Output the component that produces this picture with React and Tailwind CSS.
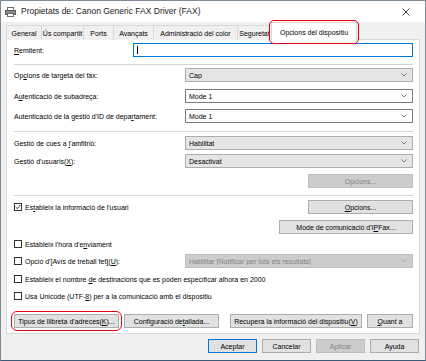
import React from "react";

function PrinterIcon() {
  return (
    <svg width="11" height="10" viewBox="0 0 11 10" className="shrink-0">
      <rect x="2.5" y="0.5" width="6" height="3" fill="#fff" stroke="#6b6b6b" />
      <rect x="0.5" y="3.5" width="10" height="4" fill="#8a8a8a" stroke="#5c5c5c" />
      <rect x="2.5" y="6.5" width="6" height="3" fill="#fff" stroke="#6b6b6b" />
    </svg>
  );
}

function Chevron({ color = "#606060" }) {
  return (
    <svg width="6" height="4" viewBox="0 0 6 4" className="shrink-0">
      <path d="M0.5 0.5 L3 3 L5.5 0.5" fill="none" stroke={color} strokeWidth="0.8" />
    </svg>
  );
}

function Combo({ value, kind = "white", className = "" }) {
  const styles = {
    white: "bg-white border-[#7a7a7a] text-black",
    gray: "bg-[#e5e5e5] border-[#adadad] text-black",
    disabled: "bg-[#cccccc] border-[#bfbfbf] text-[#838383]",
  };
  return (
    <div className={`h-[14px] border flex items-center pl-[3px] pr-[5px] ${styles[kind]} ${className}`}>
      <span className="flex-1 truncate">{value}</span>
      <Chevron color={kind === "disabled" ? "#a0a0a0" : "#606060"} />
    </div>
  );
}

function Btn({ children, disabled, primary, className = "" }) {
  return (
    <div
      className={`h-[14px] border flex items-center justify-center whitespace-nowrap ${
        disabled
          ? "bg-[#cccccc] border-[#bfbfbf] text-[#838383]"
          : primary
          ? "bg-[#e1e1e1] border-[#0078d7]"
          : "bg-[#e1e1e1] border-[#adadad]"
      } ${className}`}
    >
      {children}
    </div>
  );
}

function Check({ checked }) {
  return (
    <div className="w-[8px] h-[8px] border border-[#333] bg-white flex items-center justify-center shrink-0">
      {checked && (
        <svg width="6" height="6" viewBox="0 0 6 6">
          <path d="M0.6 3 L2.3 4.7 L5.4 1" fill="none" stroke="#222" strokeWidth="0.9" />
        </svg>
      )}
    </div>
  );
}

function Sep() {
  return <div className="h-px bg-[#d4d4d4]" />;
}

const tabs = [
  { label: "General", w: "w-[35px]" },
  { label: "Ús compartit", w: "w-[42px]" },
  { label: "Ports", w: "w-[30px]" },
  { label: "Avançats", w: "w-[40px]" },
  { label: "Administració del color", w: "w-[84px]" },
  { label: "Seguretat", w: "w-[34px]" },
];

export default function App() {
  return (
    <div className="w-[426px] h-[361px] bg-[#f0f0f0] border border-[#7d8a96] border-b-[#3e5a76] flex flex-col overflow-hidden font-['Liberation_Sans',Arial,sans-serif] text-[7px] text-black leading-none">
      {/* barra de títol */}
      <div className="h-[21px] bg-white flex items-center pl-[4px] pr-[15px] shrink-0">
        <PrinterIcon />
        <span className="ml-[5px] text-[8.5px] text-[#222]">Propietats de: Canon Generic FAX Driver (FAX)</span>
        <svg width="8" height="8" viewBox="0 0 8 8" className="ml-auto">
          <path d="M0.5 0.5 L7.5 7.5 M7.5 0.5 L0.5 7.5" stroke="#333" strokeWidth="0.9" />
        </svg>
      </div>

      {/* pestanyes */}
      <div className="h-[18px] flex items-end pl-[5px] shrink-0 relative z-10">
        {tabs.map((t) => (
          <div
            key={t.label}
            className={`${t.w} h-[15px] border border-b-0 border-r-0 border-[#d9d9d9] bg-[#f0f0f0] flex items-center justify-center whitespace-nowrap overflow-hidden`}
          >
            {t.label}
          </div>
        ))}
        <div className="h-[20px] -mb-[2px] rounded-[3px] outline outline-[1.5px] outline-offset-[1px] outline-[#e60012] flex">
          <div className="w-[86px] h-[19px] border border-b-0 border-[#d9d9d9] bg-white flex items-center justify-center whitespace-nowrap">
            Opcions del dispositiu
          </div>
        </div>
      </div>

      {/* panell */}
      <div className="mx-[5px] bg-white border border-[#d9d9d9] pl-[7px] pr-[6px] pb-[5px] -mt-px flex flex-col">
        <div className="mt-[3px] h-[14px] flex items-center">
          <span className="w-[119px]"><u>R</u>emitent:</span>
          <div className="flex-1 h-[14px] border border-[#0078d7] flex items-center pl-[3px]">
            <div className="w-px h-[8px] bg-black" />
          </div>
        </div>
        <div className="mt-[7px]"><Sep /></div>

        <div className="mt-[3px] h-[14px] flex items-center">
          <span className="w-[171px]">Op<u>c</u>ions de targeta del fax:</span>
          <Combo value="Cap" kind="gray" className="flex-1" />
        </div>
        <div className="mt-[7px] h-[14px] flex items-center">
          <span className="w-[171px]">A<u>u</u>tenticació de subadreça:</span>
          <Combo value="Mode 1" className="flex-1" />
        </div>
        <div className="mt-[6px] h-[14px] flex items-center">
          <span className="w-[171px]">Autenticació de la gestió d'ID de depa<u>r</u>tament:</span>
          <Combo value="Mode 1" className="flex-1" />
        </div>
        <div className="mt-[8px]"><Sep /></div>

        <div className="mt-[4px] h-[14px] flex items-center">
          <span className="w-[171px]">Gestió de cues a <u>l</u>'amfitrió:</span>
          <Combo value="Habilitat" kind="gray" className="flex-1" />
        </div>
        <div className="mt-[4px] h-[14px] flex items-center">
          <span className="w-[171px]">Gestió d'usuaris(<u>X</u>):</span>
          <Combo value="Desactivat" kind="gray" className="flex-1" />
        </div>
        <div className="mt-[6px] flex justify-end">
          <Btn disabled className="w-[105px]">Opcions...</Btn>
        </div>
        <div className="mt-[7px]"><Sep /></div>

        <div className="mt-[4px] h-[14px] flex items-center">
          <Check checked />
          <span className="ml-[3px]">Es<u>t</u>ableix la informació de l'usuari</span>
          <Btn className="w-[105px] ml-auto"><u>O</u>pcions...</Btn>
        </div>
        <div className="mt-[6px] flex justify-end">
          <Btn className="w-[134px]">Mode de comunicació d'I<u>P</u> Fax...</Btn>
        </div>

        <div className="mt-[3px] h-[14px] flex items-center">
          <Check />
          <span className="ml-[3px]">Estableix l'hora d'e<u>n</u>viament</span>
        </div>
        <div className="mt-[3px] h-[14px] flex items-center">
          <div className="w-[171px] flex items-center">
            <Check />
            <span className="ml-[3px]">Opció d'[Avís de treball fet](<u>U</u>):</span>
          </div>
          <Combo value="Habilitar [Notificar per tots els resultats]" kind="disabled" className="flex-1" />
        </div>
        <div className="mt-[4px] h-[14px] flex items-center">
          <Check />
          <span className="ml-[3px]">Estableix el nombre <u>d</u>e destinacions que es poden especificar alhora en 2000</span>
        </div>
        <div className="mt-[3px] h-[14px] flex items-center">
          <Check />
          <span className="ml-[3px]">Usa Unicode (UTF-<u>8</u>) per a la comunicació amb el dispositiu</span>
        </div>

        <div className="mt-[11px] h-[14px] flex items-center">
          <div className="rounded-[3px] outline outline-[1.5px] outline-offset-[2px] outline-[#e60012]">
            <Btn className="w-[105px]">Tipus de llibreta d'adreces(<u>K</u>)...</Btn>
          </div>
          <Btn className="w-[95px] ml-[5px]">Configuració de<u>t</u>allada...</Btn>
          <Btn className="w-[132px] ml-[11px]">Recupera la informació del dispositiu(<u>V</u>)</Btn>
          <Btn className="w-[46px] ml-auto"><u>Q</u>uant a</Btn>
        </div>
      </div>

      {/* botons del diàleg */}
      <div className="mt-[5px] flex justify-end gap-[5px] pr-[6px]">
        <Btn primary className="w-[49px]">Aceptar</Btn>
        <Btn className="w-[49px]">Cancelar</Btn>
        <Btn disabled className="w-[49px]">Aplicar</Btn>
        <Btn className="w-[49px]">Ayuda</Btn>
      </div>
    </div>
  );
}
